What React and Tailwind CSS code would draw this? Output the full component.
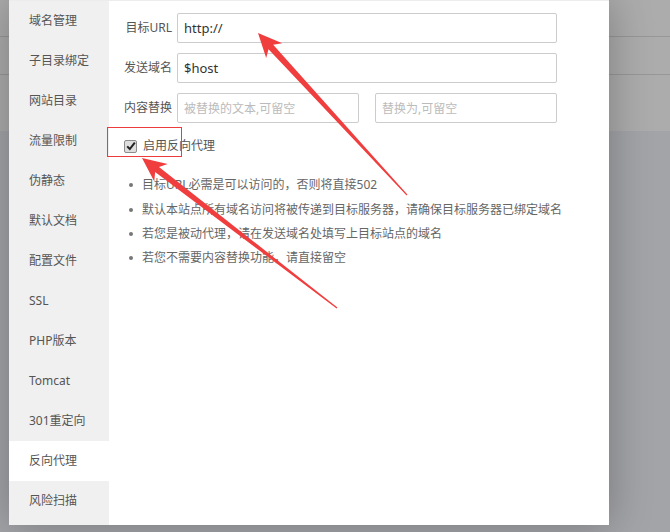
import React from "react";

const menu = [
  "域名管理",
  "子目录绑定",
  "网站目录",
  "流量限制",
  "伪静态",
  "默认文档",
  "配置文件",
  "SSL",
  "PHP版本",
  "Tomcat",
  "301重定向",
  "反向代理",
  "风险扫描",
];

const tips = [
  "目标URL必需是可以访问的，否则将直接502",
  "默认本站点所有域名访问将被传递到目标服务器，请确保目标服务器已绑定域名",
  "若您是被动代理，请在发送域名处填写上目标站点的域名",
  "若您不需要内容替换功能，请直接留空",
];

// tapered red annotation arrow, tip -> tail
function arrowPoints(tip, tail, headLen = 24, headHalf = 11, shaft = 3.2) {
  const dx = tail[0] - tip[0];
  const dy = tail[1] - tip[1];
  const len = Math.hypot(dx, dy);
  const ux = dx / len;
  const uy = dy / len;
  const nx = -uy;
  const ny = ux;
  const bx = tip[0] + ux * headLen;
  const by = tip[1] + uy * headLen;
  const bx2 = tip[0] + ux * (headLen - 5);
  const by2 = tip[1] + uy * (headLen - 5);
  const pts = [
    [tip[0], tip[1]],
    [bx + nx * headHalf, by + ny * headHalf],
    [bx2 + nx * shaft, by2 + ny * shaft],
    [tail[0] + nx * 0.6, tail[1] + ny * 0.6],
    [tail[0] - nx * 0.6, tail[1] - ny * 0.6],
    [bx2 - nx * shaft, by2 - ny * shaft],
    [bx - nx * headHalf, by - ny * headHalf],
  ];
  return pts.map((p) => p.map((v) => v.toFixed(1)).join(",")).join(" ");
}

function Field({ label, children }) {
  return (
    <div className="flex items-center h-[30px]">
      <span className="w-[50px] mr-[5px] text-right text-[12px] text-[#555] whitespace-nowrap">{label}</span>
      {children}
    </div>
  );
}

export default function App() {
  return (
    <div
      className="relative w-[670px] h-[532px] overflow-hidden"
      style={{ fontFamily: '"Noto Sans", "Noto Sans CJK SC", sans-serif' }}
    >
      {/* page behind the dimmed backdrop */}
      <div className="flex flex-col h-full">
        <div className="h-[37px] bg-[#acacac] border-b border-[#979797]" />
        <div className="h-[38px] bg-[#acacac] border-b border-[#979797]" />
        <div className="h-[56px] bg-[#acacac]" />
        <div className="flex-1 bg-[#a3a4a8]" />
      </div>

      {/* dialog */}
      <div className="absolute left-[9px] top-0 w-[600px] h-[525px] flex flex-col bg-white shadow-[0_0_40px_rgba(0,0,0,0.28)]">
        <div className="h-px bg-[#ececec]" />
        <div className="flex flex-1">
          <div className="w-[100px] bg-[#f0f0f0]">
            {menu.map((m) => (
              <div
                key={m}
                className={
                  "h-[40px] flex items-center pl-[20px] text-[12px] text-[#555] " +
                  (m === "反向代理" ? "bg-white" : "")
                }
              >
                {m}
              </div>
            ))}
          </div>

          <div className="flex-1 pl-[13px] pt-[12px]">
            <div className="flex flex-col gap-[10px]">
              <Field label="目标URL">
                <input
                  defaultValue="http://"
                  className="w-[380px] h-[30px] px-[6px] border border-[#ccc] rounded-[2px] text-[13px] text-[#333] outline-none"
                />
              </Field>
              <Field label="发送域名">
                <input
                  defaultValue="$host"
                  className="w-[380px] h-[30px] px-[6px] border border-[#ccc] rounded-[2px] text-[13px] text-[#333] outline-none"
                />
              </Field>
              <Field label="内容替换">
                <div className="flex gap-[16px]">
                  <input
                    placeholder="被替换的文本,可留空"
                    className="w-[182px] h-[30px] px-[6px] border border-[#ccc] rounded-[2px] text-[12px] text-[#333] placeholder:text-[#bbb] outline-none"
                  />
                  <input
                    placeholder="替换为,可留空"
                    className="w-[182px] h-[30px] px-[6px] border border-[#ccc] rounded-[2px] text-[12px] text-[#333] placeholder:text-[#bbb] outline-none"
                  />
                </div>
              </Field>
            </div>

            <div className="flex items-center h-[26px] mt-[10px] pl-[2px]">
              <span className="w-[13px] h-[13px] rounded-[2px] border border-[#8c8c8c] bg-[#dedede] flex items-center justify-center">
                <svg width="10" height="10" viewBox="0 0 10 10">
                  <path d="M1.2 5.4 L3.8 8 L8.8 1.6" fill="none" stroke="#222" strokeWidth="2" />
                </svg>
              </span>
              <span className="ml-[6px] text-[12px] text-[#555]">启用反向代理</span>
            </div>

            <ul className="mt-[14px]">
              {tips.map((t) => (
                <li key={t} className="flex items-center h-[24.4px] text-[12px] text-[#666]">
                  <span className="ml-[7px] w-[4px] h-[4px] rounded-full bg-[#777]" />
                  <span className="ml-[9px] whitespace-nowrap">{t}</span>
                </li>
              ))}
            </ul>
          </div>
        </div>
      </div>

      {/* annotations */}
      <div className="absolute left-[107px] top-[127px] w-[75px] h-[30px] border border-[#ee3b3b] pointer-events-none" />
      <svg className="absolute inset-0 pointer-events-none" width="670" height="532">
        <polygon points={arrowPoints([258, 33], [407, 195])} fill="#f03e3e" />
        <polygon points={arrowPoints([142, 158], [337, 308])} fill="#f03e3e" />
      </svg>
    </div>
  );
}
